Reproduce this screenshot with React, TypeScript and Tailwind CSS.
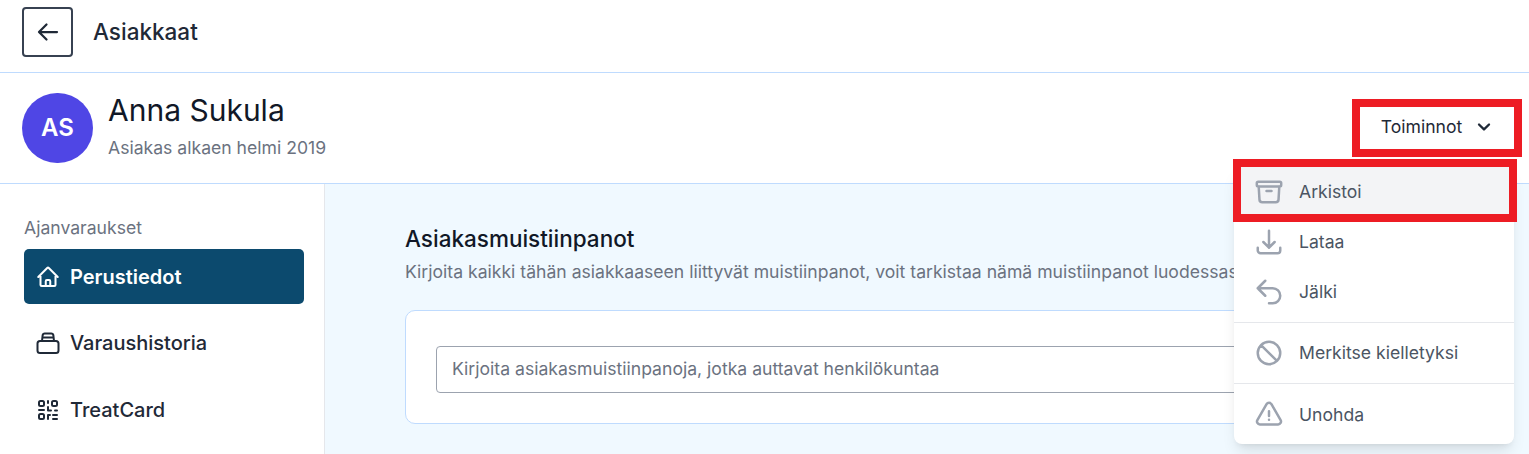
import React from "react";
import {
  HiOutlineArchiveBox,
  HiOutlineArrowDownTray,
  HiOutlineArrowLeft,
  HiOutlineArrowUturnLeft,
  HiOutlineExclamationTriangle,
  HiOutlineHome,
  HiOutlineNoSymbol,
} from "react-icons/hi2";
import { HiChevronDown } from "react-icons/hi2";

const font = "font-['Inter',sans-serif]";

const BookingIcon = () => (
  <svg width="24" height="24" viewBox="0 0 24 24" fill="none" stroke="#1f2937" strokeWidth="2" strokeLinejoin="round">
    <path d="M6 10 6.6 4.5C6.8 3.2 7.6 2.5 8.8 2.5h6.4c1.2 0 2 .7 2.2 2l.6 5.5" />
    <path d="M6.3 6.5h11.4" />
    <rect x="1.5" y="10" width="21" height="12" rx="2.5" />
  </svg>
);

const QrIcon = () => (
  <svg width="24" height="24" viewBox="0 0 24 24" fill="none" stroke="#1f2937" strokeWidth="2" strokeLinecap="round" strokeLinejoin="round">
    <rect x="3" y="3" width="5" height="5" rx="1.5" />
    <rect x="16" y="3" width="5" height="5" rx="1.5" />
    <rect x="3" y="16" width="5" height="5" rx="1.5" />
    <path d="M12 3v2" />
    <path d="M3 12h5" />
    <path d="M12 9v3.5h3" />
    <path d="M19 12.5h2" />
    <path d="M12 21v-4h2" />
    <path d="M17 17h4" />
    <path d="M17 21h4" />
  </svg>
);

const SideItem = ({ icon, text, active }: { icon: React.ReactNode; text: string; active?: boolean }) => (
  <div
    className={
      active
        ? "flex h-[55px] items-center gap-[10px] rounded-[5px] bg-[#0c4a6e] pl-[12px] text-[20px] font-semibold text-white"
        : "mt-[11px] flex h-[56px] items-center gap-[10px] pl-[12px] text-[20px] font-medium text-[#1f2937]"
    }
  >
    {icon}
    {text}
  </div>
);

const MenuItem = ({ icon, text, active, h }: { icon: React.ReactNode; text: string; active?: boolean; h: string }) => (
  <div className={`flex items-center gap-[15px] pl-[20px] text-[17.6px] text-[#4b5563] ${h} ${active ? "bg-[#f3f4f6]" : ""}`}>
    <span className="flex w-[30px] justify-center text-[#9ca3af]">{icon}</span>
    {text}
  </div>
);

export default function App() {
  return (
    <div className={`relative h-[454px] w-full overflow-hidden bg-white ${font}`}>
      <header className="flex h-[73px] items-center gap-[20px] border-b border-[#bfdbfe] pb-[9px] pl-[22px]">
        <button className="flex h-[50px] w-[51px] items-center justify-center rounded-[4px] border-2 border-[#374151] text-[#1f2937]">
          <HiOutlineArrowLeft size={24} strokeWidth={2.25} />
        </button>
        <span className="text-[22.5px] font-medium text-[#1f2937]">Asiakkaat</span>
      </header>

      <section className="flex h-[111px] items-center border-b border-[#bfdbfe] pl-[22px]">
        <div className="flex h-[70px] w-[71px] items-center justify-center rounded-full bg-[#4f46e5] text-[24px] font-semibold text-white">
          AS
        </div>
        <div className="ml-[15px] pb-[5px]">
          <h1 className="text-[30px] leading-[36px] font-normal text-[#111827]">Anna Sukula</h1>
          <p className="mt-[9px] text-[17.6px] leading-[22px] text-[#6b7280]">Asiakas alkaen helmi 2019</p>
        </div>
        <button className="ml-auto mr-[15px] mb-[2px] flex h-[42px] w-[155px] items-center justify-center gap-[14px] text-[17.6px] text-[#1f2937]">
          Toiminnot
          <HiChevronDown size={16} strokeWidth={2} />
        </button>
      </section>

      <div className="flex h-[270px]">
        <aside className="w-[325px] shrink-0 border-r border-[#e5e7eb] pl-[24px] pr-[20px] pt-[33px]">
          <p className="mb-[10px] text-[17.6px] leading-[22px] text-[#6b7280]">Ajanvaraukset</p>
          <SideItem active icon={<HiOutlineHome size={24} strokeWidth={2} />} text="Perustiedot" />
          <SideItem icon={<BookingIcon />} text="Varaushistoria" />
          <SideItem icon={<QrIcon />} text="TreatCard" />
        </aside>
        <main className="min-w-0 flex-1 bg-[#f0f9ff] pl-[80px] pr-[80px] pt-[41px]">
          <h2 className="text-[22.5px] leading-[28px] font-medium text-[#111827]">Asiakasmuistiinpanot</h2>
          <p className="mt-[8px] overflow-hidden text-[17.6px] leading-[22px] whitespace-nowrap text-[#6b7280]">
            Kirjoita kaikki tähän asiakkaaseen liittyvät muistiinpanot, voit tarkistaa nämä muistiinpanot luodessasi
          </p>
          <div className="mt-[27px] rounded-[10px] border border-[#bfdbfe] bg-white px-[30px] pt-[35px] pb-[30px]">
            <div className="flex h-[47px] items-center rounded-[4px] border border-[#9ca3af] px-[15px] text-[17.6px] text-[#6b7280]">
              Kirjoita asiakasmuistiinpanoja, jotka auttavat henkilökuntaa
            </div>
          </div>
        </main>
      </div>

      <div className="absolute top-[167px] left-[1234px] w-[280px] overflow-hidden rounded-b-[8px] bg-white shadow-lg">
        <MenuItem active h="h-[50px]" icon={<HiOutlineArchiveBox size={30} strokeWidth={2} />} text="Arkistoi" />
        <MenuItem h="h-[50px]" icon={<HiOutlineArrowDownTray size={30} strokeWidth={2} />} text="Lataa" />
        <MenuItem h="h-[56px] border-b border-[#e5e7eb] pb-[5px]" icon={<HiOutlineArrowUturnLeft size={30} strokeWidth={2} />} text="Jälki" />
        <MenuItem h="h-[61px] border-b border-[#e5e7eb]" icon={<HiOutlineNoSymbol size={32} strokeWidth={2} />} text="Merkitse kielletyksi" />
        <MenuItem h="h-[60px] pt-[2px]" icon={<HiOutlineExclamationTriangle size={34} strokeWidth={2} />} text="Unohda" />
      </div>

      {/* annotation boxes drawn over the screenshot */}
      <div className="absolute top-[99px] left-[1352px] h-[58px] w-[170px] border-[8px] border-[#ed1c24]" />
      <div className="absolute top-[159px] left-[1233px] h-[63px] w-[284px] border-[8px] border-[#ed1c24]" />
    </div>
  );
}
